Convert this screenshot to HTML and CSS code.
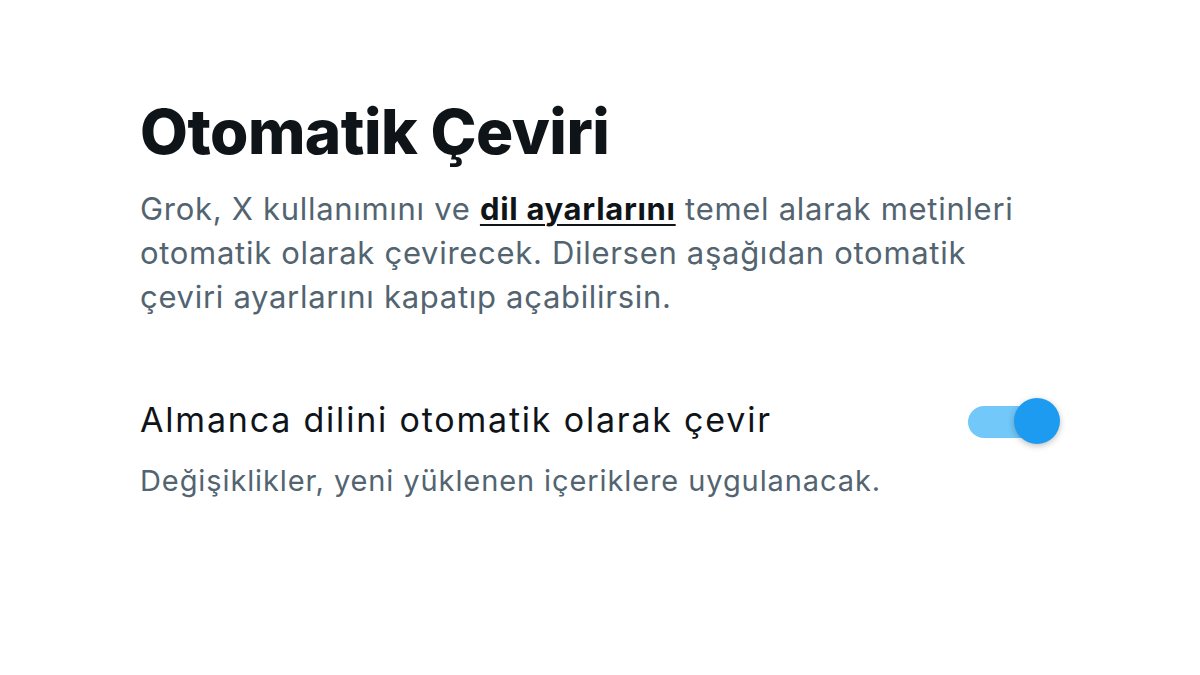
FILE: index.html
```html
<!DOCTYPE html>
<html lang="tr">
<head>
<meta charset="utf-8">
<link rel="stylesheet" href="styles.css">
</head>
<body>
<main class="page">
  <h1 class="title">Otomatik Çeviri</h1>
  <p class="desc">Grok, X kullanımını ve <a class="link" href="#">dil ayarlarını</a> temel alarak metinleri otomatik olarak çevirecek. Dilersen aşağıdan otomatik çeviri ayarlarını kapatıp açabilirsin.</p>
  <div class="setting">
    <div class="setting-text">
      <div class="setting-label">Almanca dilini otomatik olarak çevir</div>
      <div class="setting-hint">Değişiklikler, yeni yüklenen içeriklere uygulanacak.</div>
    </div>
    <div class="toggle"><span class="track"></span><span class="knob"></span></div>
  </div>
</main>
</body>
</html>
```
FILE: styles.css
```css
html, body { margin: 0; padding: 0; background: #fff; }
body { width: 1200px; height: 675px; overflow: hidden; font-family: Inter, "Noto Sans", sans-serif; }
.page { padding: 96px 140px 0 140px; }
.title { margin: 0; font-size: 62px; font-weight: 800; color: #0f1419; line-height: 72px; letter-spacing: -0.5px; }
.desc { margin: 19px 0 0 0; font-size: 31px; line-height: 44px; color: #536471; width: 900px; letter-spacing: 0.7px; }
.link { color: #0f1419; font-weight: 700; text-decoration: underline; text-underline-offset: 4px; text-decoration-thickness: 2px; }
.setting { display: flex; align-items: flex-start; justify-content: space-between; margin-top: 79px; width: 920px; }
.setting-label { font-size: 34px; line-height: 44px; color: #0f1419; letter-spacing: 1.8px; }
.setting-hint { font-size: 29px; line-height: 40px; color: #536471; margin-top: 19px; letter-spacing: 0.9px; }
.toggle { position: relative; width: 94px; height: 48px; margin-top: 0; }
.track { position: absolute; left: 2px; top: 8px; width: 84px; height: 32px; border-radius: 16px; background: #72c8f8; }
.knob { position: absolute; right: 0; top: 0; width: 46px; height: 46px; border-radius: 50%; background: #1d9bf0; box-shadow: 0 2px 6px rgba(0,0,0,0.25); }
```
